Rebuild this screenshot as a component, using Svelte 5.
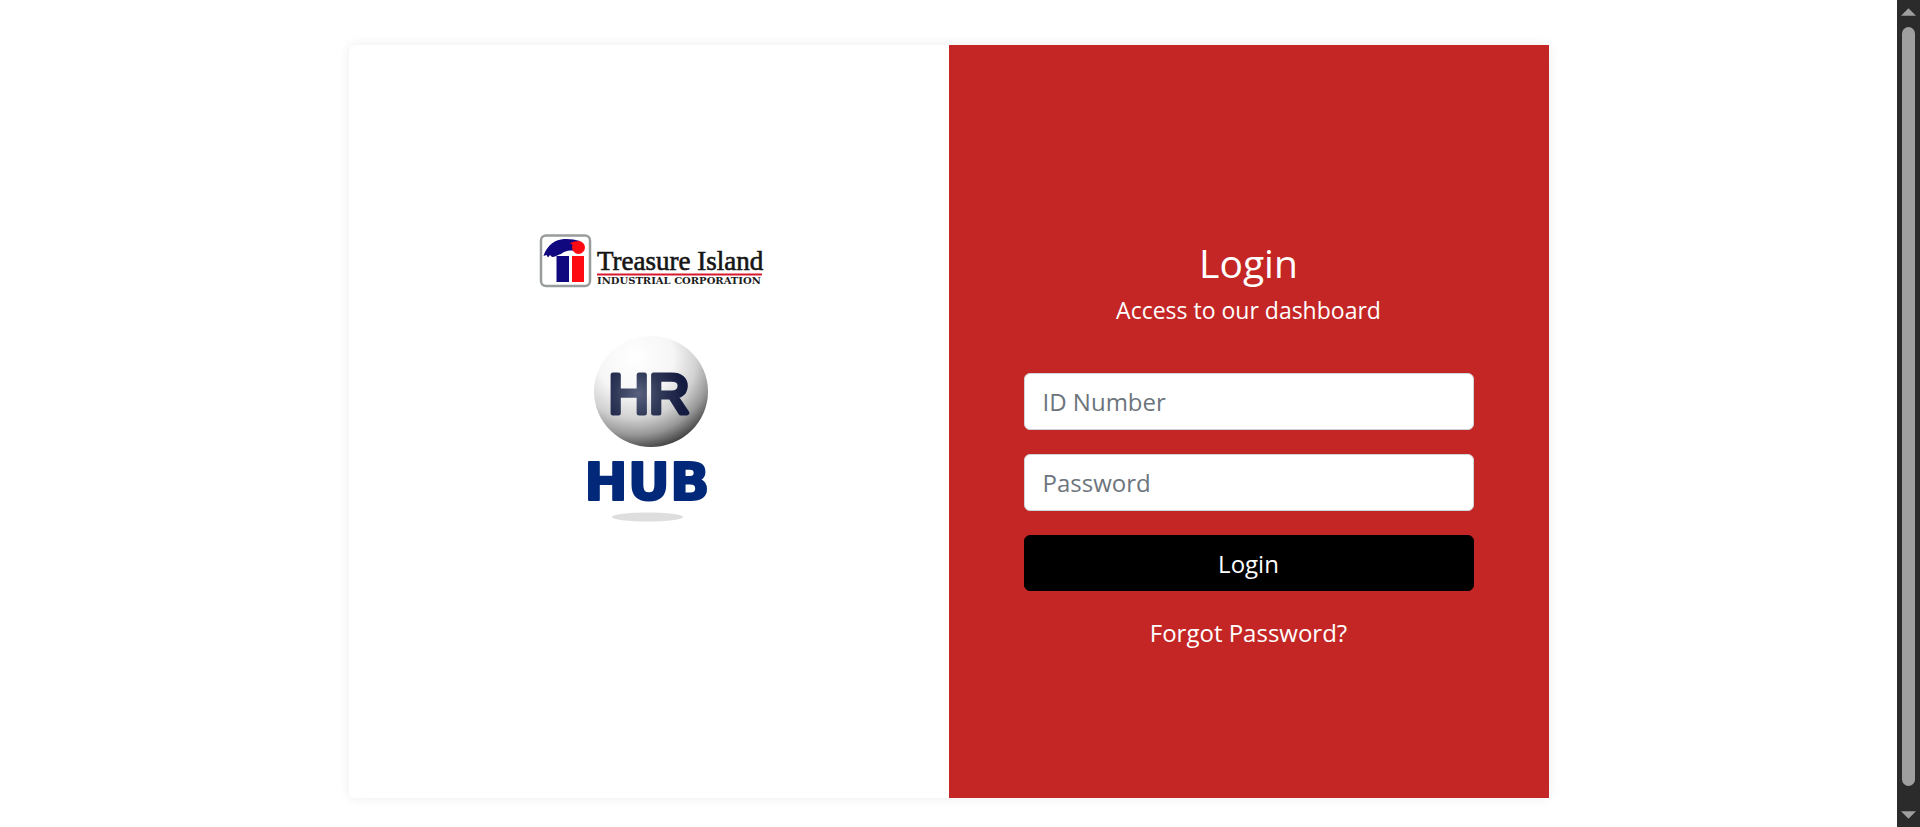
<script>
  let idNumber = $state('');
  let password = $state('');
</script>

<div class="page">
  <main>
    <section class="card">
      <div class="brand">
        <svg class="company" viewBox="534 230 230 60" role="img" aria-label="Treasure Island Industrial Corporation">
          <rect x="541" y="235.500" width="49" height="50.500" rx="5" fill="#fff" stroke="#999c9c" stroke-width="2.500" />
          <path fill="#10087f" d="M543.500 256 C546 248 552 241 561 239.500 C568 238.500 574 239.500 580 241 L576 252 C571 249 565 251 561 254 C557 255 555 257 552 257 L550 255 L548 257.500 L546.500 255 Z" />
          <path fill="#10087f" d="M556.500 256h12.500v26h-12.500z" />
          <circle cx="578.500" cy="247.500" r="6.500" fill="#fe0a12" />
          <path fill="#fe0a12" d="M570 243l6-2-1 4 3 2-5 3 1-4zM572 256h12v26h-12z" />
          <text class="name" x="597" y="270">Treasure Island</text>
          <path fill="#d8182c" d="M597 273.500h165v2h-165z" />
          <text class="trade" x="597" y="284">INDUSTRIAL CORPORATION</text>
        </svg>
        <svg class="hub" viewBox="534 330 230 196" role="img" aria-label="HR Hub">
          <defs>
            <radialGradient id="ball" cx="0.36" cy="0.2" r="0.84">
              <stop offset="0" stop-color="#fff" />
              <stop offset="0.400" stop-color="#f6f6f6" />
              <stop offset="0.640" stop-color="#d2d2d2" />
              <stop offset="0.820" stop-color="#989898" />
              <stop offset="1" stop-color="#3c3c3c" />
            </radialGradient>
            <radialGradient id="ink" gradientUnits="userSpaceOnUse" cx="638" cy="394" r="46">
              <stop offset="0" stop-color="#59617f" />
              <stop offset="0.500" stop-color="#303858" />
              <stop offset="1" stop-color="#141b40" />
            </radialGradient>
          </defs>
          <ellipse cx="651" cy="391.500" rx="57" ry="55.500" fill="url(#ball)" />
          <text class="hr" x="649" y="413">HR</text>
          <text class="word" x="647" y="500">HUB</text>
          <ellipse cx="647.500" cy="517" rx="35.500" ry="4.500" fill="#dedede" />
        </svg>
      </div>

      <div class="access">
        <h1>Login</h1>
        <p>Access to our dashboard</p>
        <form onsubmit={(e) => e.preventDefault()}>
          <input type="text" aria-label="ID Number" placeholder="ID Number" bind:value={idNumber} />
          <input type="password" aria-label="Password" placeholder="Password" bind:value={password} />
          <button type="submit">Login</button>
        </form>
        <a href="#forgot">Forgot Password?</a>
      </div>
    </section>
  </main>

  <div class="scrollbar" aria-hidden="true">
    <svg viewBox="0 0 16 8"><path d="M8 0l8 8H0z" /></svg>
    <div class="thumb"></div>
    <svg viewBox="0 0 16 8"><path d="M0 0h16L8 8z" /></svg>
  </div>
</div>

<style>
  :global(body) {
    margin: 0;
    background: #fff;
  }
  .page {
    display: flex;
    height: 100vh;
    overflow: hidden;
    font-family: 'Open Sans', sans-serif;
    font-size: 24px;
  }
  main {
    flex: 1;
    padding: 45px 24px 29px;
    display: flex;
    justify-content: center;
    align-items: stretch;
  }
  .card {
    display: grid;
    grid-template-columns: 1fr 1fr;
    width: 100%;
    max-width: 1200px;
    border-radius: 6px;
    box-shadow: 0 0 12px rgba(0, 0, 0, 0.08);
  }
  .brand {
    display: flex;
    flex-direction: column;
    align-items: center;
    gap: 40px;
    padding-top: 185px;
  }
  .brand svg {
    width: 230px;
    flex: none;
  }
  .name {
    font: 27px 'Liberation Serif', serif;
    fill: #151515;
    stroke: #151515;
    stroke-width: 0.6px;
  }
  .trade {
    font: bold 10px 'DejaVu Serif', 'Liberation Serif', serif;
    fill: #1c1c1c;
  }
  .hr,
  .word {
    text-anchor: middle;
    stroke-linejoin: round;
  }
  .hr {
    font: 56px 'Liberation Sans', sans-serif;
    fill: url(#ink);
    stroke: url(#ink);
    stroke-width: 5px;
  }
  .word {
    font: bold 52px 'DejaVu Sans', sans-serif;
    fill: #02287a;
    stroke: #02287a;
    stroke-width: 2px;
  }
  .access {
    box-sizing: border-box;
    padding: 195px 75px 0;
    background: #c42625;
    color: #fff;
    text-align: center;
  }
  h1 {
    margin: 0;
    font-size: 39px;
    font-weight: 400;
    line-height: 46px;
  }
  p {
    margin: 6px 0 45px;
    font-size: 23px;
    line-height: 36px;
  }
  form {
    display: flex;
    flex-direction: column;
    gap: 24px;
    margin-bottom: 24px;
  }
  input,
  button {
    box-sizing: border-box;
    width: 100%;
    height: 57px;
    border: 1px solid #ced4da;
    border-radius: 6px;
    padding: 0 18px;
    font: inherit;
    background: #fff;
    color: #495057;
  }
  input::placeholder {
    color: #6c757d;
    opacity: 1;
  }
  button {
    height: 56px;
    border-color: #000;
    background: #000;
    color: #fff;
  }
  a {
    color: #fff;
    text-decoration: none;
    line-height: 36px;
  }
  .scrollbar {
    box-sizing: border-box;
    display: flex;
    flex-direction: column;
    align-items: center;
    gap: 11px;
    width: 23px;
    padding: 8px 0;
    background: #2b2b2b;
  }
  .scrollbar svg {
    width: 15px;
    height: 8px;
    flex: none;
    fill: #9f9f9f;
  }
  .thumb {
    flex: 1;
    width: 13px;
    margin-bottom: 14px;
    border-radius: 7px;
    background: #9f9f9f;
  }
</style>
